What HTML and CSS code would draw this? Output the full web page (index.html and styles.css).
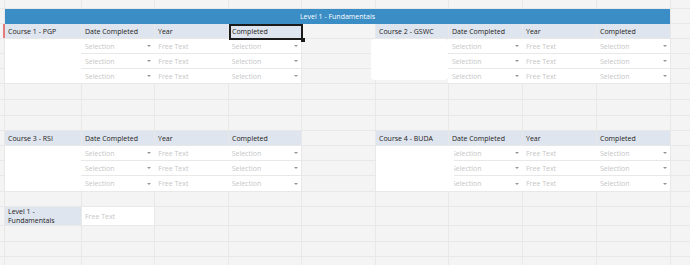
FILE: index.html
```html
<!DOCTYPE html>
<html lang="en">
<head>
    <meta charset="UTF-8">
    <title>Level 1 - Fundamentals</title>
    <link rel="stylesheet" href="styles.css">
</head>
<body>
<div class="sheet">
    <!-- row 0 -->
    <div class="c"></div><div class="c"></div><div class="c"></div><div class="c"></div><div class="c"></div><div class="c"></div><div class="c"></div><div class="c"></div><div class="c"></div><div class="c"></div><div class="c"></div>

    <!-- title band -->
    <div class="c"></div>
    <div class="band">Level 1 - Fundamentals</div>
    <div class="c"></div>

    <!-- course 1 / course 2 headers -->
    <div class="c mark"></div>
    <div class="hd">Course 1 - PGP</div>
    <div class="hd">Date Completed</div>
    <div class="hd">Year</div>
    <div class="hd cur">Completed</div>
    <div class="c"></div>
    <div class="hd">Course 2 - GSWC</div>
    <div class="hd">Date Completed</div>
    <div class="hd">Year</div>
    <div class="hd">Completed</div>
    <div class="c"></div>

    <!-- course 1 / course 2 rows -->
    <div class="c"></div>
    <div class="name"></div>
    <div class="row"><span class="f sel">Selection</span><span class="f">Free Text</span><span class="f sel">Selection</span></div>
    <div class="c"></div>
    <div class="c"></div>
    <div class="row"><span class="f sel">Selection</span><span class="f">Free Text</span><span class="f sel">Selection</span></div>
    <div class="c"></div>

    <div class="c"></div>
    <div class="row"><span class="f sel">Selection</span><span class="f">Free Text</span><span class="f sel">Selection</span></div>
    <div class="c"></div>
    <div class="c"></div>
    <div class="row"><span class="f sel">Selection</span><span class="f">Free Text</span><span class="f sel">Selection</span></div>
    <div class="c"></div>

    <div class="c"></div>
    <div class="row"><span class="f sel">Selection</span><span class="f">Free Text</span><span class="f sel">Selection</span></div>
    <div class="c"></div>
    <div class="c"></div>
    <div class="row"><span class="f sel">Selection</span><span class="f">Free Text</span><span class="f sel">Selection</span></div>
    <div class="c"></div>

    <!-- empty rows -->
    <div class="c"></div><div class="c"></div><div class="c"></div><div class="c"></div><div class="c"></div><div class="c"></div><div class="c"></div><div class="c"></div><div class="c"></div><div class="c"></div><div class="c"></div>
    <div class="c"></div><div class="c"></div><div class="c"></div><div class="c"></div><div class="c"></div><div class="c"></div><div class="c"></div><div class="c"></div><div class="c"></div><div class="c"></div><div class="c"></div>
    <div class="c"></div><div class="c"></div><div class="c"></div><div class="c"></div><div class="c"></div><div class="c"></div><div class="c"></div><div class="c"></div><div class="c"></div><div class="c"></div><div class="c"></div>

    <!-- course 3 / course 4 headers -->
    <div class="c"></div>
    <div class="hd">Course 3 - RSI</div>
    <div class="hd">Date Completed</div>
    <div class="hd">Year</div>
    <div class="hd">Completed</div>
    <div class="c"></div>
    <div class="hd">Course 4 - BUDA</div>
    <div class="hd">Date Completed</div>
    <div class="hd">Year</div>
    <div class="hd">Completed</div>
    <div class="c"></div>

    <!-- course 3 / course 4 rows -->
    <div class="c"></div>
    <div class="name"></div>
    <div class="row"><span class="f sel">Selection</span><span class="f">Free Text</span><span class="f sel">Selection</span></div>
    <div class="c"></div>
    <div class="name wide"></div>
    <div class="row"><span class="f sel">Selection</span><span class="f">Free Text</span><span class="f sel">Selection</span></div>
    <div class="c"></div>

    <div class="c"></div>
    <div class="row"><span class="f sel">Selection</span><span class="f">Free Text</span><span class="f sel">Selection</span></div>
    <div class="c"></div>
    <div class="row"><span class="f sel">Selection</span><span class="f">Free Text</span><span class="f sel">Selection</span></div>
    <div class="c"></div>

    <div class="c"></div>
    <div class="row"><span class="f sel">Selection</span><span class="f">Free Text</span><span class="f sel">Selection</span></div>
    <div class="c"></div>
    <div class="row"><span class="f sel">Selection</span><span class="f">Free Text</span><span class="f sel">Selection</span></div>
    <div class="c"></div>

    <!-- empty row -->
    <div class="c"></div><div class="c"></div><div class="c"></div><div class="c"></div><div class="c"></div><div class="c"></div><div class="c"></div><div class="c"></div><div class="c"></div><div class="c"></div><div class="c"></div>

    <!-- level summary -->
    <div class="c"></div>
    <div class="hd lbl">Level 1 - Fundamentals</div>
    <div class="free">Free Text</div>
    <div class="c"></div><div class="c"></div><div class="c"></div><div class="c"></div><div class="c"></div><div class="c"></div><div class="c"></div><div class="c"></div>

    <!-- empty rows -->
    <div class="c"></div><div class="c"></div><div class="c"></div><div class="c"></div><div class="c"></div><div class="c"></div><div class="c"></div><div class="c"></div><div class="c"></div><div class="c"></div><div class="c"></div>
    <div class="c"></div><div class="c"></div><div class="c"></div><div class="c"></div><div class="c"></div><div class="c"></div><div class="c"></div><div class="c"></div><div class="c"></div><div class="c"></div><div class="c"></div>
    <div class="c"></div><div class="c"></div><div class="c"></div><div class="c"></div><div class="c"></div><div class="c"></div><div class="c"></div><div class="c"></div><div class="c"></div><div class="c"></div><div class="c"></div>

    <!-- blanked-out patch over course 2 -->
    <div class="patch"></div>
</div>
</body>
</html>
```

FILE: styles.css
```css
* {
    margin: 0;
    padding: 0;
    box-sizing: border-box;
}

body {
    background: #f4f4f4;
    font-family: "Open Sans", "Liberation Sans", sans-serif;
    font-size: 7px;
    overflow: hidden;
}

.sheet {
    position: relative;
    display: grid;
    grid-template-columns: 4px 76px 72px 73px 72px 73px 72px 73px 73px 73px 19px;
    grid-template-rows: 8px 14px 14px 14px 14px 14px 15px 15px 14px 14px 14px 14px 15px 14px 18px 15px 14px 20px;
    gap: 1px;
    width: 690px;
    background: #e8e8e8;
}

.c {
    background: #f4f4f4;
}

.mark {
    margin-right: -1px;
    border-right: 2px solid #e57a7a;
}

.band {
    grid-column: span 9;
    margin-bottom: -1px;
    display: flex;
    align-items: center;
    justify-content: center;
    background: #3b8dc6;
    color: #fff;
}

.hd {
    display: flex;
    align-items: center;
    padding-left: 3px;
    background: #dfe5ee;
    color: #222;
    white-space: nowrap;
    overflow: hidden;
}

.lbl {
    white-space: normal;
    line-height: 9px;
}

.cur {
    position: relative;
    overflow: visible;
}

.cur::before {
    content: "";
    position: absolute;
    left: 0;
    top: 0;
    right: -2px;
    bottom: -2px;
    border: 2px solid #1b1b1b;
}

.cur::after {
    content: "";
    position: absolute;
    right: -4px;
    bottom: -4px;
    width: 4px;
    height: 4px;
    background: #1b1b1b;
}

.name {
    grid-row: span 3;
    background: #fff;
}

.wide {
    position: relative;
    z-index: 1;
    margin-right: -6px;
}

.row {
    grid-column: span 3;
    margin-left: -1px;
    display: flex;
    background: #fff;
}

.f {
    flex: 1;
    position: relative;
    display: flex;
    align-items: center;
    padding-left: 4px;
    color: #c6c6c6;
    white-space: nowrap;
}

.sel::after {
    content: "";
    position: absolute;
    right: 3px;
    top: 50%;
    margin-top: -1px;
    border-left: 2px solid transparent;
    border-right: 2px solid transparent;
    border-top: 2px solid #959595;
}

.free {
    display: flex;
    align-items: center;
    padding-left: 3px;
    background: #fff;
    color: #c6c6c6;
}

.patch {
    position: absolute;
    left: 371px;
    top: 39px;
    width: 77px;
    height: 41px;
    background: #fff;
    border-radius: 4px;
}
```
